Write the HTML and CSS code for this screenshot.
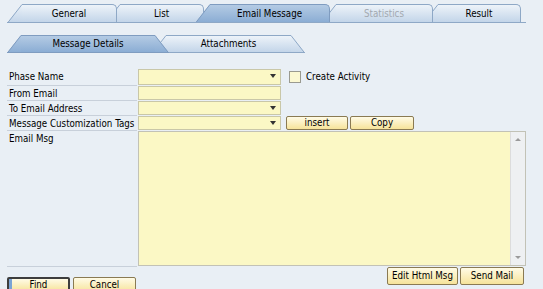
FILE: index.html
```html
<!DOCTYPE html>
<html>
<head>
<meta charset="utf-8">
<link rel="stylesheet" href="styles.css">
</head>
<body>
<svg class="defs" width="0" height="0">
  <defs>
    <linearGradient id="gi" x1="0" y1="0" x2="0" y2="1">
      <stop offset="0" stop-color="#edf3f9"/>
      <stop offset="1" stop-color="#c3d5e9"/>
    </linearGradient>
    <linearGradient id="ga" x1="0" y1="0" x2="0" y2="1">
      <stop offset="0" stop-color="#b4cbe4"/>
      <stop offset="1" stop-color="#8badd4"/>
    </linearGradient>
  </defs>
</svg>

<div class="tabs">
  <div class="tab t-general">
    <svg class="slant" viewBox="0 0 14 18"><path d="M0 18 L14 0 L14 18 Z" fill="url(#gi)"/><path d="M0.3 18 L14 0.5" stroke="#8ea8c6" fill="none"/></svg>
    <div class="tab-body w-general">General</div>
  </div>
  <div class="tab t-list">
    <svg class="slant" viewBox="0 0 14 18"><path d="M0 18 L14 0 L14 18 Z" fill="url(#gi)"/><path d="M0.3 18 L14 0.5" stroke="#8ea8c6" fill="none"/></svg>
    <div class="tab-body w-list">List</div>
  </div>
  <div class="tab t-email active">
    <svg class="slant" viewBox="0 0 14 18"><path d="M0 18 L14 0 L14 18 Z" fill="url(#ga)"/><path d="M0.3 18 L14 0.5" stroke="#7f9cc0" fill="none"/></svg>
    <div class="tab-body w-email">Email Message</div>
  </div>
  <div class="tab t-stat">
    <svg class="slant" viewBox="0 0 14 18"><path d="M0 18 L14 0 L14 18 Z" fill="url(#gi)"/><path d="M0.3 18 L14 0.5" stroke="#8ea8c6" fill="none"/></svg>
    <div class="tab-body w-stat disabled">Statistics</div>
  </div>
  <div class="tab t-result">
    <svg class="slant" viewBox="0 0 14 18"><path d="M0 18 L14 0 L14 18 Z" fill="url(#gi)"/><path d="M0.3 18 L14 0.5" stroke="#8ea8c6" fill="none"/></svg>
    <div class="tab-body w-result">Result</div>
  </div>
</div>

<div class="subtabs">
  <div class="subtab s-details active">
    <svg class="slant" viewBox="0 0 14 18"><path d="M0 18 L14 0 L14 18 Z" fill="url(#ga)"/><path d="M0.3 18 L14 0.5 M0 17.5 L14 17.5" stroke="#7f9cc0" fill="none"/></svg>
    <div class="subtab-body w-details">Message Details</div>
    <svg class="slant" viewBox="0 0 14 18"><path d="M0 0 L14 18 L0 18 Z" fill="url(#ga)"/><path d="M0 0.5 L13.7 18 M0 17.5 L14 17.5" stroke="#7f9cc0" fill="none"/></svg>
  </div>
  <div class="subtab s-attach">
    <svg class="slant" viewBox="0 0 14 18"><path d="M0 18 L14 0 L14 18 Z" fill="url(#gi)"/><path d="M0.3 18 L14 0.5 M0 17.5 L14 17.5" stroke="#8ea8c6" fill="none"/></svg>
    <div class="subtab-body w-attach">Attachments</div>
    <svg class="slant" viewBox="0 0 14 18"><path d="M0 0 L14 18 L0 18 Z" fill="url(#gi)"/><path d="M0 0.5 L13.7 18 M0 17.5 L14 17.5" stroke="#8ea8c6" fill="none"/></svg>
  </div>
</div>

<div class="form">
  <div class="row r1">
    <div class="label">Phase Name</div>
    <div class="field select"><span class="arrow"></span></div>
    <span class="check"></span>
    <span class="check-label">Create Activity</span>
  </div>
  <div class="row">
    <div class="label">From Email</div>
    <div class="field"></div>
  </div>
  <div class="row">
    <div class="label">To Email Address</div>
    <div class="field select"><span class="arrow"></span></div>
  </div>
  <div class="row">
    <div class="label">Message Customization Tags</div>
    <div class="field select"><span class="arrow"></span></div>
    <button class="btn b-insert">insert</button>
    <button class="btn b-copy">Copy</button>
  </div>
  <div class="row r5">
    <div class="label tall">Email Msg</div>
    <div class="textarea">
      <div class="ta-content"></div>
      <div class="scrollbar">
        <span class="sc-up"></span>
        <span class="sc-down"></span>
      </div>
    </div>
  </div>
  <div class="bottom">
    <div class="left-group">
      <button class="btn low b-find">Find</button>
      <button class="btn low b-cancel">Cancel</button>
    </div>
    <div class="right-group">
      <button class="btn big b-edit">Edit Html Msg</button>
      <button class="btn big b-send">Send Mail</button>
    </div>
  </div>
</div>
</body>
</html>
```

FILE: styles.css
```css
html, body {
  margin: 0;
  padding: 0;
}
body {
  width: 543px;
  height: 289px;
  overflow: hidden;
  background: #e9eff5;
  font-family: "DejaVu Sans Condensed", "DejaVu Sans", sans-serif;
  font-size: 9.7px;
  color: #000;
}
.defs {
  position: absolute;
  width: 0;
  height: 0;
}

/* main tabs */
.tabs {
  display: flex;
  margin: 4px 0 0 7px;
  padding-left: 1px;
  width: 518px;
  height: 18px;
  border-bottom: 1px solid #8ea8c6;
}
.tab {
  display: flex;
  position: relative;
  height: 18px;
}
.slant {
  display: block;
  width: 14px;
  height: 18px;
  flex: none;
}
.tab-body {
  height: 17px;
  line-height: 17px;
  text-align: center;
  border-top: 1px solid #8ea8c6;
  border-right: 1px solid #8ea8c6;
  border-top-right-radius: 5px;
  background: linear-gradient(#edf3f9, #c3d5e9);
  box-sizing: content-box;
}
.tab.active .tab-body {
  background: linear-gradient(#b4cbe4, #8badd4);
  border-color: #7f9cc0;
}
.disabled { color: #a3a9b0; }
.t-general { z-index: 5; }
.t-list { z-index: 4; margin-left: -11px; }
.t-email { z-index: 10; margin-left: -8px; }
.t-stat { z-index: 3; margin-left: -8px; }
.t-result { z-index: 2; margin-left: -9px; }
.w-general { width: 94px; }
.w-list { width: 83px; }
.w-email { width: 119px; }
.w-stat { width: 96px; }
.w-result { width: 82px; }

/* sub tabs */
.subtabs {
  display: flex;
  margin: 12px 0 0 7px;
  height: 18px;
}
.subtab {
  display: flex;
  position: relative;
  height: 18px;
}
.subtab-body {
  height: 16px;
  line-height: 16px;
  text-align: center;
  border-top: 1px solid #8ea8c6;
  border-bottom: 1px solid #8ea8c6;
  background: linear-gradient(#edf3f9, #c3d5e9);
}
.subtab.active .subtab-body {
  background: linear-gradient(#b4cbe4, #8badd4);
  border-color: #7f9cc0;
}
.s-details { z-index: 3; }
.s-attach { z-index: 2; margin-left: -17px; }
.w-details { width: 134px; }
.w-attach { width: 125px; }

/* form */
.form {
  margin: 16px 0 0 7px;
}
.row {
  display: flex;
  align-items: flex-start;
}
.label {
  width: 130px;
  height: 15px;
  line-height: 15px;
  padding-left: 2px;
  box-sizing: border-box;
  border-bottom: 1px solid #c8d0da;
  flex: none;
  white-space: nowrap;
}
.r1 .label {
  height: 17px;
  line-height: 16px;
}
.field {
  position: relative;
  margin-left: 1px;
  width: 143px;
  height: 14px;
  box-sizing: border-box;
  border: 1px solid #c9c7a8;
  background: #fbf8c5;
  flex: none;
}
.r1 .field { height: 16px; }
.arrow {
  position: absolute;
  right: 4px;
  top: 4px;
  width: 0;
  height: 0;
  border-left: 3px solid transparent;
  border-right: 3px solid transparent;
  border-top: 4px solid #333;
}
.check {
  width: 10px;
  height: 10px;
  margin: 2px 0 0 8px;
  border: 1px solid #9a9a90;
  background: #fbf8d2;
  flex: none;
}
.check-label {
  margin-left: 5px;
  line-height: 15px;
}
.btn {
  font-family: inherit;
  font-size: inherit;
  color: #000;
  padding: 0;
  margin: 0;
  height: 14px;
  line-height: 12px;
  border: 1px solid #8a7a52;
  border-radius: 2px;
  background: linear-gradient(#fffbe6, #f6e39a);
  text-align: center;
  flex: none;
}
.b-insert { width: 62px; margin-left: 5px; }
.b-copy { width: 64px; margin-left: 2px; }

.r5 .label.tall {
  height: 136px;
  line-height: 15px;
}
.textarea {
  display: flex;
  margin-left: 1px;
  width: 388px;
  height: 135px;
  box-sizing: border-box;
  border: 1px solid #c2c2b6;
  background: #fbf8c5;
  flex: none;
}
.ta-content { flex: 1; }
.scrollbar {
  width: 14px;
  display: flex;
  flex-direction: column;
  justify-content: space-between;
  align-items: center;
  padding: 6px 0 6px;
  background: #eef0f2;
  border-left: 1px solid #dcdcdc;
}
.sc-up, .sc-down {
  width: 0;
  height: 0;
  border-left: 3px solid transparent;
  border-right: 3px solid transparent;
}
.sc-up { border-bottom: 3px solid #9a9a9a; }
.sc-down { border-top: 3px solid #9a9a9a; }

.bottom {
  display: flex;
  justify-content: space-between;
  align-items: flex-start;
  width: 517px;
}
.left-group {
  display: flex;
  gap: 3px;
  margin-top: 10px;
}
.right-group {
  display: flex;
  gap: 2px;
}
.btn.big {
  height: 18px;
  line-height: 16px;
}
.btn.low {
  height: 16px;
  line-height: 11px;
  padding-bottom: 1px;
}
.b-find {
  width: 63px;
  border: 2px solid #3d3d3d;
  box-shadow: inset 3px 0 0 #7aa3d4;
}
.b-cancel { width: 63px; }
.b-edit { width: 71px; }
.b-send { width: 64px; }
```
